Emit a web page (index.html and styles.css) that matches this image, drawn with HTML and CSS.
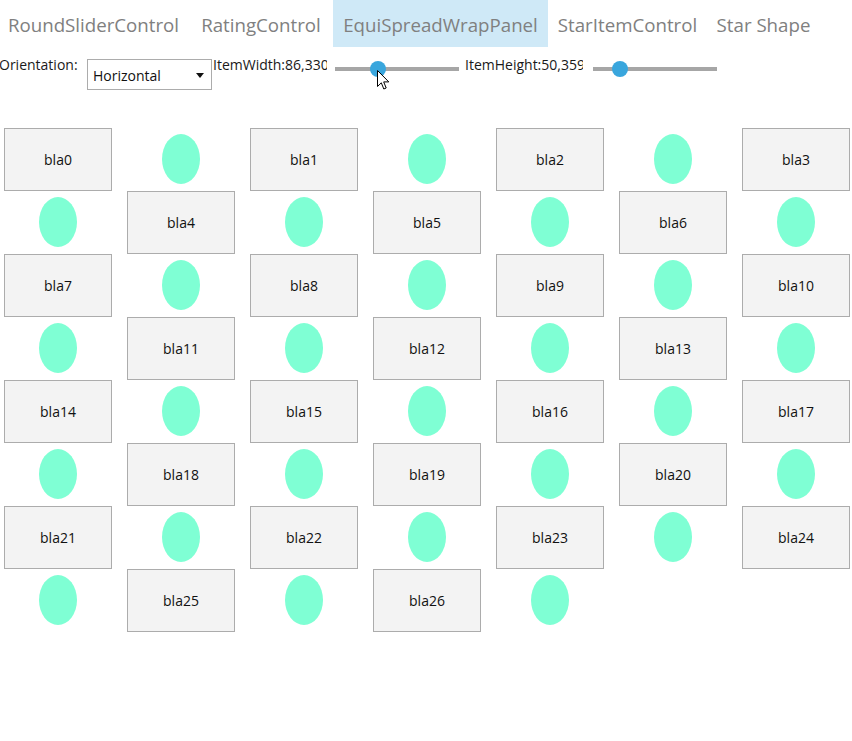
FILE: index.html
```html
<!DOCTYPE html>
<html>
<head>
<meta charset="utf-8">
<link rel="stylesheet" href="styles.css">
</head>
<body>
<div class="app">
  <div class="tabs">
    <div class="tab t1">RoundSliderControl</div>
    <div class="tab t2">RatingControl</div>
    <div class="tab t3 selected">EquiSpreadWrapPanel</div>
    <div class="tab t4">StarItemControl</div>
    <div class="tab t5">Star Shape</div>
  </div>
  <div class="toolbar">
    <div class="label orient">Orientation:</div>
    <div class="combo"><span class="combo-text">Horizontal</span><span class="combo-arrow"></span></div>
    <div class="label val w1">ItemWidth:86,330</div>
    <div class="slider s1"><div class="track"></div><div class="thumb"></div></div>
    <div class="label val w2">ItemHeight:50,359</div>
    <div class="slider s2"><div class="track"></div><div class="thumb"></div></div>
    <svg class="cursor" width="13" height="21" viewBox="0 0 13 21"><path d="M0.5 0.5 L0.5 16.5 L4.3 12.8 L6.8 19 L9.2 18 L6.7 11.9 L11.8 11.9 Z" fill="#fff" stroke="#000" stroke-width="1" stroke-linejoin="miter"/></svg>
  </div>
  <div class="panel" id="panel"></div>
</div>
<script>
  var p = document.getElementById('panel');
  var b = 0;
  for (var i = 0; i < 54; i++) {
    var cell = document.createElement('div');
    cell.className = 'cell';
    if (i % 2 === 0) {
      var box = document.createElement('div');
      box.className = 'box';
      box.textContent = 'bla' + (b++);
      cell.appendChild(box);
    } else {
      var e = document.createElement('div');
      e.className = 'ellipse';
      cell.appendChild(e);
    }
    p.appendChild(cell);
  }
</script>
</body>
</html>
```
FILE: styles.css
```css
html, body {
  margin: 0;
  padding: 0;
  background: #ffffff;
}
body {
  font-family: "Open Sans", "Noto Sans", sans-serif;
  width: 852px;
  height: 741px;
  overflow: hidden;
}
.tabs {
  display: flex;
  height: 47px;
  margin-left: -2px;
}
.tab {
  height: 47px;
  line-height: 49px;
  font-size: 18.7px;
  color: #808080;
  text-align: center;
  white-space: nowrap;
}
.t1 { width: 191px; }
.t2 { width: 144px; }
.t3 { width: 215px; }
.t4 { width: 159px; }
.t5 { width: 113px; }
.tab.selected {
  background: #cfe9f7;
}
.toolbar {
  position: relative;
  display: flex;
  align-items: flex-start;
  height: 81px;
  padding-top: 7px;
  box-sizing: border-box;
}
.label {
  font-size: 14px;
  color: #1a1a1a;
  white-space: nowrap;
  line-height: 20px;
}
.orient {
  margin-left: -1px;
  width: 88px;
  margin-top: 1px;
}
.combo {
  width: 125px;
  height: 31px;
  box-sizing: border-box;
  border: 1px solid #acacac;
  margin-top: 5px;
  display: flex;
  align-items: center;
  justify-content: space-between;
  padding: 2px 7px 0 5px;
  background: #fff;
}
.combo-text {
  font-size: 14px;
  color: #111;
}
.combo-arrow {
  width: 0;
  height: 0;
  border-left: 4px solid transparent;
  border-right: 4px solid transparent;
  border-top: 5px solid #111;
  margin-top: -1px;
}
.val {
  overflow: hidden;
  margin-top: 1px;
  padding-left: 1px;
}
.w1 { width: 114px; margin-right: 8px; }
.w2 { width: 118px; margin-left: 5px; margin-right: 10px; }
.slider {
  position: relative;
  width: 124px;
  height: 20px;
  display: flex;
  align-items: center;
}
.track {
  width: 100%;
  height: 4px;
  background: #a6a6a6;
  margin-top: 9px;
}
.thumb {
  position: absolute;
  top: 7px;
  width: 16px;
  height: 16px;
  border-radius: 50%;
  background: #39a6dd;
}
.s1 .thumb { left: 35px; }
.s2 .thumb { left: 19px; }
.cursor {
  position: absolute;
  left: 377px;
  top: 23px;
}
.panel {
  display: grid;
  grid-template-columns: repeat(7, 108px);
  grid-auto-rows: 62px;
  column-gap: 15px;
  row-gap: 1px;
  padding-left: 4px;
}
.cell {
  display: flex;
  align-items: center;
  justify-content: center;
}
.box {
  width: 108px;
  height: 63px;
  box-sizing: border-box;
  border: 1px solid #acacac;
  background: #f3f3f3;
  display: flex;
  align-items: center;
  justify-content: center;
  font-size: 14px;
  color: #111;
  margin-top: 1px;
}
.ellipse {
  width: 38px;
  height: 50px;
  border-radius: 50%;
  background: #7fffd4;
}
```
